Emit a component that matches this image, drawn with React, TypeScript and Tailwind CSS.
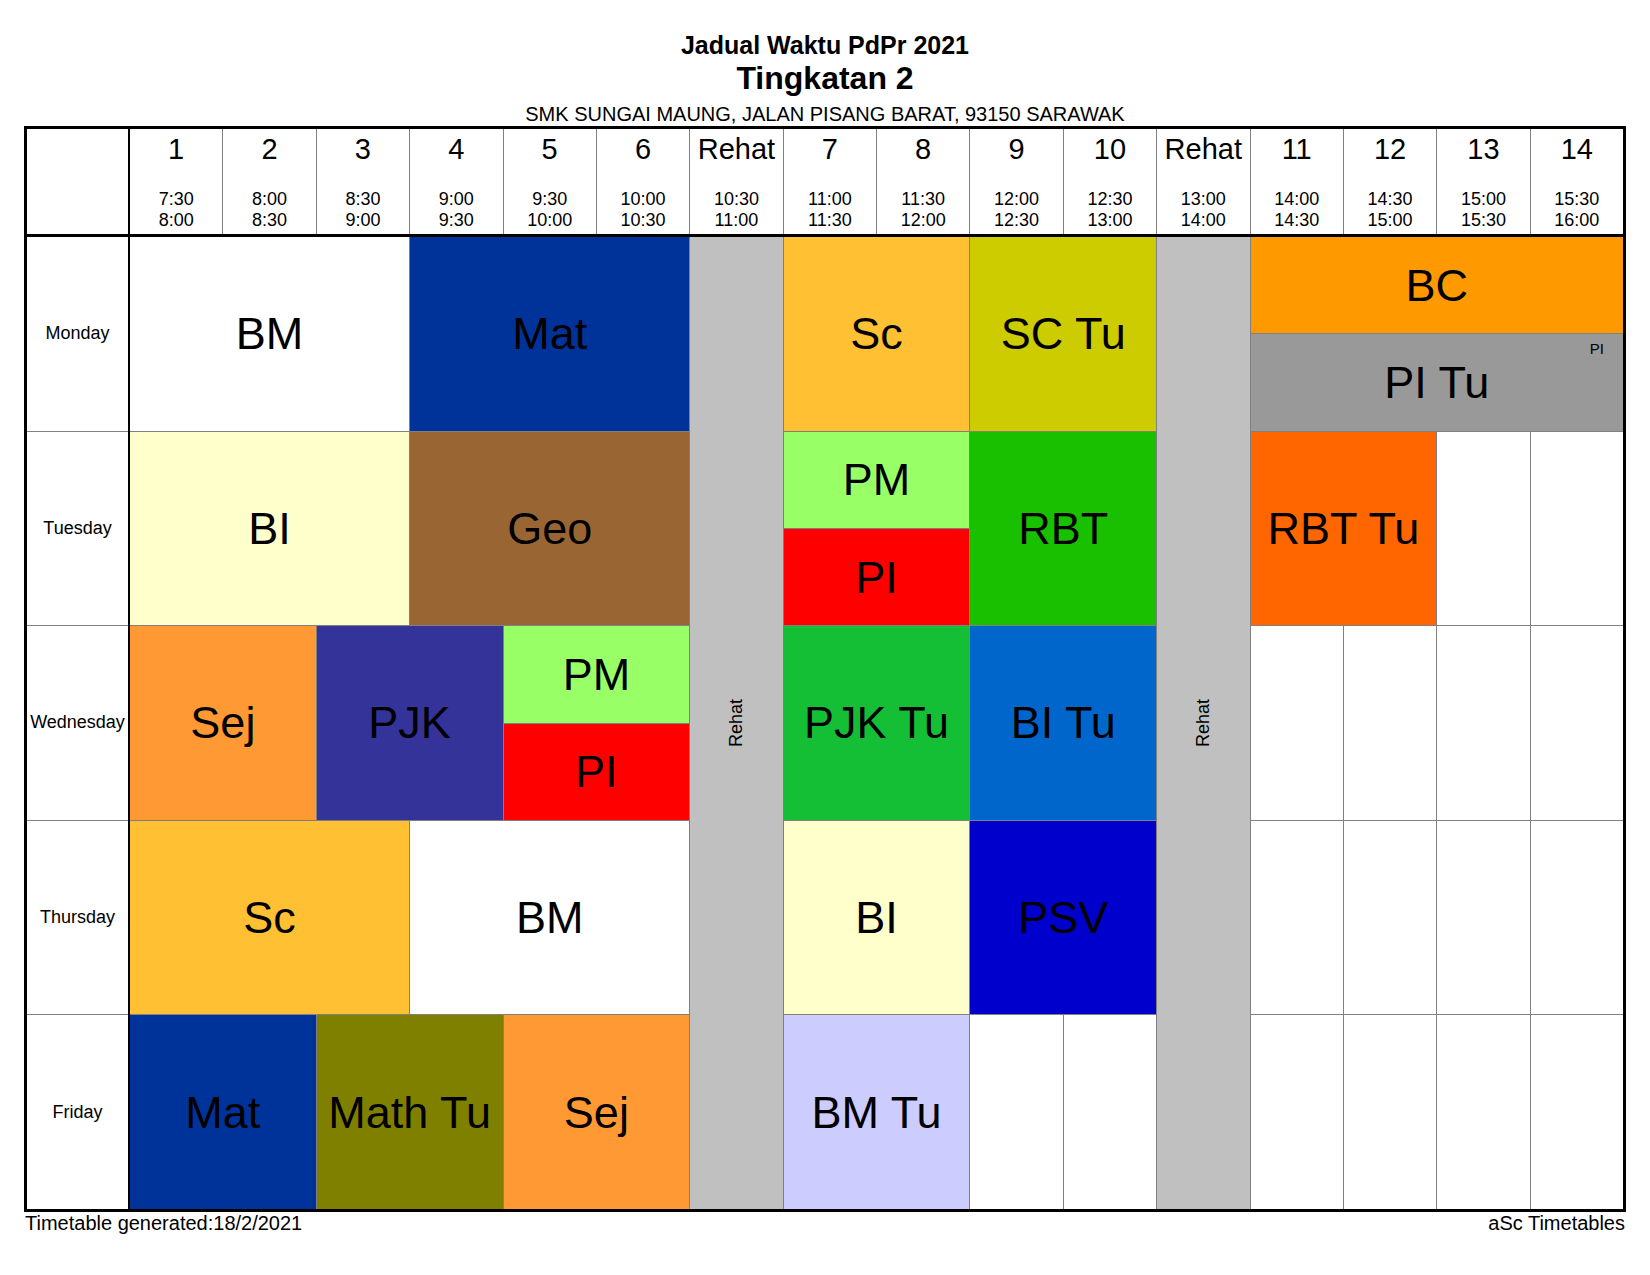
import React from 'react';

type Block = {
  pos: string;
  bg: string;
  label?: string;
  top?: { label: string; bg: string };
  bottom?: { label: string; bg: string; tag?: string };
};

const periods = [
  { n: '1', from: '7:30', to: '8:00' },
  { n: '2', from: '8:00', to: '8:30' },
  { n: '3', from: '8:30', to: '9:00' },
  { n: '4', from: '9:00', to: '9:30' },
  { n: '5', from: '9:30', to: '10:00' },
  { n: '6', from: '10:00', to: '10:30' },
  { n: 'Rehat', from: '10:30', to: '11:00' },
  { n: '7', from: '11:00', to: '11:30' },
  { n: '8', from: '11:30', to: '12:00' },
  { n: '9', from: '12:00', to: '12:30' },
  { n: '10', from: '12:30', to: '13:00' },
  { n: 'Rehat', from: '13:00', to: '14:00' },
  { n: '11', from: '14:00', to: '14:30' },
  { n: '12', from: '14:30', to: '15:00' },
  { n: '13', from: '15:00', to: '15:30' },
  { n: '14', from: '15:30', to: '16:00' },
];

const days = ['Monday', 'Tuesday', 'Wednesday', 'Thursday', 'Friday'];

const blocks: Block[] = [
  // Monday
  { pos: 'col-start-1 col-span-3 row-start-1', bg: 'bg-white', label: 'BM' },
  { pos: 'col-start-4 col-span-3 row-start-1', bg: 'bg-[#003399]', label: 'Mat' },
  { pos: 'col-start-8 col-span-2 row-start-1', bg: 'bg-[#ffc033]', label: 'Sc' },
  { pos: 'col-start-10 col-span-2 row-start-1', bg: 'bg-[#cccc00]', label: 'SC Tu' },
  {
    pos: 'col-start-13 col-span-4 row-start-1',
    bg: 'bg-[#808080]',
    top: { label: 'BC', bg: 'bg-[#ff9900]' },
    bottom: { label: 'PI Tu', bg: 'bg-[#999999]', tag: 'PI' },
  },
  // Tuesday
  { pos: 'col-start-1 col-span-3 row-start-2', bg: 'bg-[#ffffcc]', label: 'BI' },
  { pos: 'col-start-4 col-span-3 row-start-2', bg: 'bg-[#996633]', label: 'Geo' },
  {
    pos: 'col-start-8 col-span-2 row-start-2',
    bg: 'bg-[#808080]',
    top: { label: 'PM', bg: 'bg-[#99ff66]' },
    bottom: { label: 'PI', bg: 'bg-[#ff0000]' },
  },
  { pos: 'col-start-10 col-span-2 row-start-2', bg: 'bg-[#19c000]', label: 'RBT' },
  { pos: 'col-start-13 col-span-2 row-start-2', bg: 'bg-[#ff6600]', label: 'RBT Tu' },
  { pos: 'col-start-15 row-start-2', bg: 'bg-white' },
  { pos: 'col-start-16 row-start-2', bg: 'bg-white' },
  // Wednesday
  { pos: 'col-start-1 col-span-2 row-start-3', bg: 'bg-[#ff9933]', label: 'Sej' },
  { pos: 'col-start-3 col-span-2 row-start-3', bg: 'bg-[#333399]', label: 'PJK' },
  {
    pos: 'col-start-5 col-span-2 row-start-3',
    bg: 'bg-[#808080]',
    top: { label: 'PM', bg: 'bg-[#99ff66]' },
    bottom: { label: 'PI', bg: 'bg-[#ff0000]' },
  },
  { pos: 'col-start-8 col-span-2 row-start-3', bg: 'bg-[#15bf35]', label: 'PJK Tu' },
  { pos: 'col-start-10 col-span-2 row-start-3', bg: 'bg-[#0066cc]', label: 'BI Tu' },
  { pos: 'col-start-13 row-start-3', bg: 'bg-white' },
  { pos: 'col-start-14 row-start-3', bg: 'bg-white' },
  { pos: 'col-start-15 row-start-3', bg: 'bg-white' },
  { pos: 'col-start-16 row-start-3', bg: 'bg-white' },
  // Thursday
  { pos: 'col-start-1 col-span-3 row-start-4', bg: 'bg-[#ffc033]', label: 'Sc' },
  { pos: 'col-start-4 col-span-3 row-start-4', bg: 'bg-white', label: 'BM' },
  { pos: 'col-start-8 col-span-2 row-start-4', bg: 'bg-[#ffffcc]', label: 'BI' },
  { pos: 'col-start-10 col-span-2 row-start-4', bg: 'bg-[#0000cc]', label: 'PSV' },
  { pos: 'col-start-13 row-start-4', bg: 'bg-white' },
  { pos: 'col-start-14 row-start-4', bg: 'bg-white' },
  { pos: 'col-start-15 row-start-4', bg: 'bg-white' },
  { pos: 'col-start-16 row-start-4', bg: 'bg-white' },
  // Friday
  { pos: 'col-start-1 col-span-2 row-start-5', bg: 'bg-[#003399]', label: 'Mat' },
  { pos: 'col-start-3 col-span-2 row-start-5', bg: 'bg-[#808000]', label: 'Math Tu' },
  { pos: 'col-start-5 col-span-2 row-start-5', bg: 'bg-[#ff9933]', label: 'Sej' },
  { pos: 'col-start-8 col-span-2 row-start-5', bg: 'bg-[#ccccff]', label: 'BM Tu' },
  { pos: 'col-start-10 row-start-5', bg: 'bg-white' },
  { pos: 'col-start-11 row-start-5', bg: 'bg-white' },
  { pos: 'col-start-13 row-start-5', bg: 'bg-white' },
  { pos: 'col-start-14 row-start-5', bg: 'bg-white' },
  { pos: 'col-start-15 row-start-5', bg: 'bg-white' },
  { pos: 'col-start-16 row-start-5', bg: 'bg-white' },
];

function Label({ text }: { text: string }) {
  return <span className="text-[45px] leading-none text-black whitespace-nowrap">{text}</span>;
}

function Rehat({ pos }: { pos: string }) {
  return (
    <div className={`${pos} bg-[#c0c0c0] flex items-center justify-center`}>
      <span className="[writing-mode:vertical-rl] rotate-180 text-[18px] leading-none text-black">Rehat</span>
    </div>
  );
}

export default function App() {
  return (
    <div
      className="w-[1650px] h-[1275px] bg-white text-black"
      style={{ fontFamily: '"Liberation Sans", Arial, sans-serif' }}
    >
      {/* title */}
      <div className="pt-[30px] text-center">
        <div className="text-[25px] leading-[30px] font-bold">Jadual Waktu PdPr 2021</div>
        <div className="text-[32px] leading-[36px] font-bold">Tingkatan 2</div>
        <div className="mt-[6px] text-[20px] leading-[24px]">
          SMK SUNGAI MAUNG, JALAN PISANG BARAT, 93150 SARAWAK
        </div>
      </div>

      {/* timetable */}
      <div className="ml-[24px] w-[1602px] h-[1086px] border-[3px] border-black flex flex-col">
        <div className="h-[108px] flex border-b-[3px] border-black">
          <div className="w-[103px] border-r-2 border-black bg-white" />
          <div className="flex-1 grid grid-cols-16 gap-px bg-[#808080]">
            {periods.map((p, i) => (
              <div key={i} className="bg-white flex flex-col items-center">
                <div className="mt-[4px] text-[29px] leading-[32px]">{p.n}</div>
                <div className="mt-[24px] text-[18px] leading-[21px] text-center">
                  <div>{p.from}</div>
                  <div>{p.to}</div>
                </div>
              </div>
            ))}
          </div>
        </div>

        <div className="flex-1 flex">
          <div className="w-[103px] border-r-2 border-black grid grid-rows-5 gap-px bg-[#808080]">
            {days.map((d) => (
              <div key={d} className="bg-white flex items-center justify-center text-[18px]">
                {d}
              </div>
            ))}
          </div>
          <div className="flex-1 grid grid-cols-16 grid-rows-5 gap-px bg-[#808080]">
            <Rehat pos="col-start-7 row-start-1 row-span-5" />
            <Rehat pos="col-start-12 row-start-1 row-span-5" />
            {blocks.map((b, i) =>
              b.top && b.bottom ? (
                <div key={i} className={`${b.pos} ${b.bg} flex flex-col gap-px`}>
                  <div className={`flex-1 ${b.top.bg} flex items-center justify-center`}>
                    <Label text={b.top.label} />
                  </div>
                  <div className={`relative flex-1 ${b.bottom.bg} flex items-center justify-center`}>
                    <Label text={b.bottom.label} />
                    {b.bottom.tag && (
                      <span className="absolute top-[7px] right-[19px] text-[15px] leading-none">
                        {b.bottom.tag}
                      </span>
                    )}
                  </div>
                </div>
              ) : (
                <div key={i} className={`${b.pos} ${b.bg} flex items-center justify-center`}>
                  {b.label && <Label text={b.label} />}
                </div>
              )
            )}
          </div>
        </div>
      </div>

      {/* footer */}
      <div className="mx-[25px] flex justify-between text-[20px] leading-[22px]">
        <span>Timetable generated:18/2/2021</span>
        <span>aSc Timetables</span>
      </div>
    </div>
  );
}
